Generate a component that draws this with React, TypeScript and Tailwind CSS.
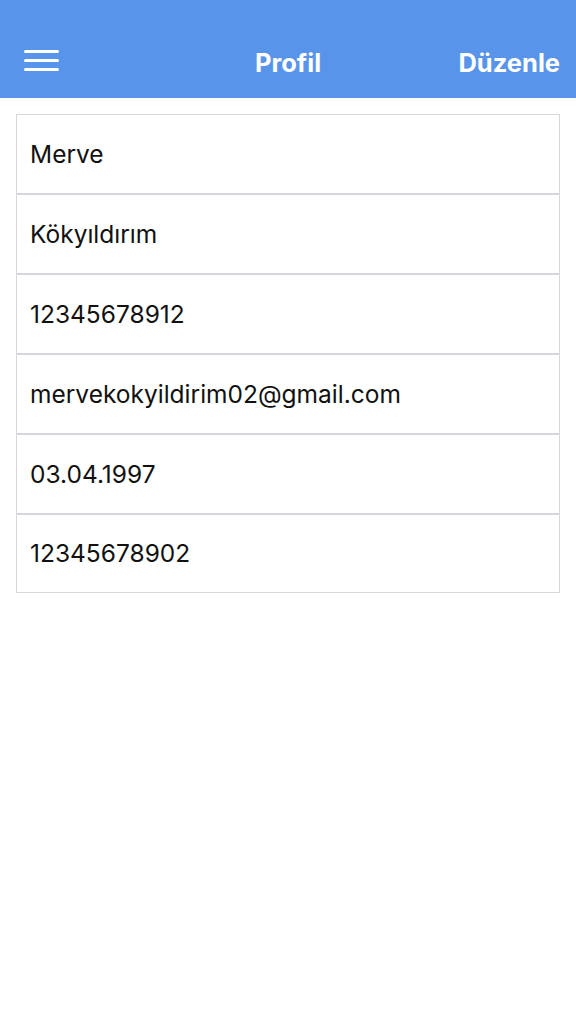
import React from "react";

const rows = [
  "Merve",
  "Kökyıldırım",
  "12345678912",
  "mervekokyildirim02@gmail.com",
  "03.04.1997",
  "12345678902",
];

export default function App() {
  return (
    <div className="w-[576px] h-[1024px] bg-white" style={{ fontFamily: "Inter, 'Noto Sans', sans-serif" }}>
      <div className="h-[98px] bg-[#5894ea] grid grid-cols-[1fr_auto_1fr] items-center pt-[28px] px-[16px]">
        <div className="pl-[8px] mb-[6px]">
          <div className="flex flex-col gap-[6px] w-[35px]">
            <div className="h-[3px] bg-white rounded" />
            <div className="h-[3px] bg-white rounded" />
            <div className="h-[3px] bg-white rounded" />
          </div>
        </div>
        <div className="text-center text-white font-bold text-[25.5px] leading-[30px]">Profil</div>
        <div className="text-right text-white font-bold text-[25.5px] leading-[30px]">Düzenle</div>
      </div>
      <div className="mx-[16px] mt-[16px] border border-[#d8d8dc]">
        {rows.map((r, i) => (
          <div
            key={i}
            className={
              "flex items-center pl-[13px] text-[24.5px] text-[#111] " +
              (i < rows.length - 1 ? "h-[80px] border-b-2 border-[#d5d5dd]" : "h-[77px]")
            }
          >
            {r}
          </div>
        ))}
      </div>
    </div>
  );
}
